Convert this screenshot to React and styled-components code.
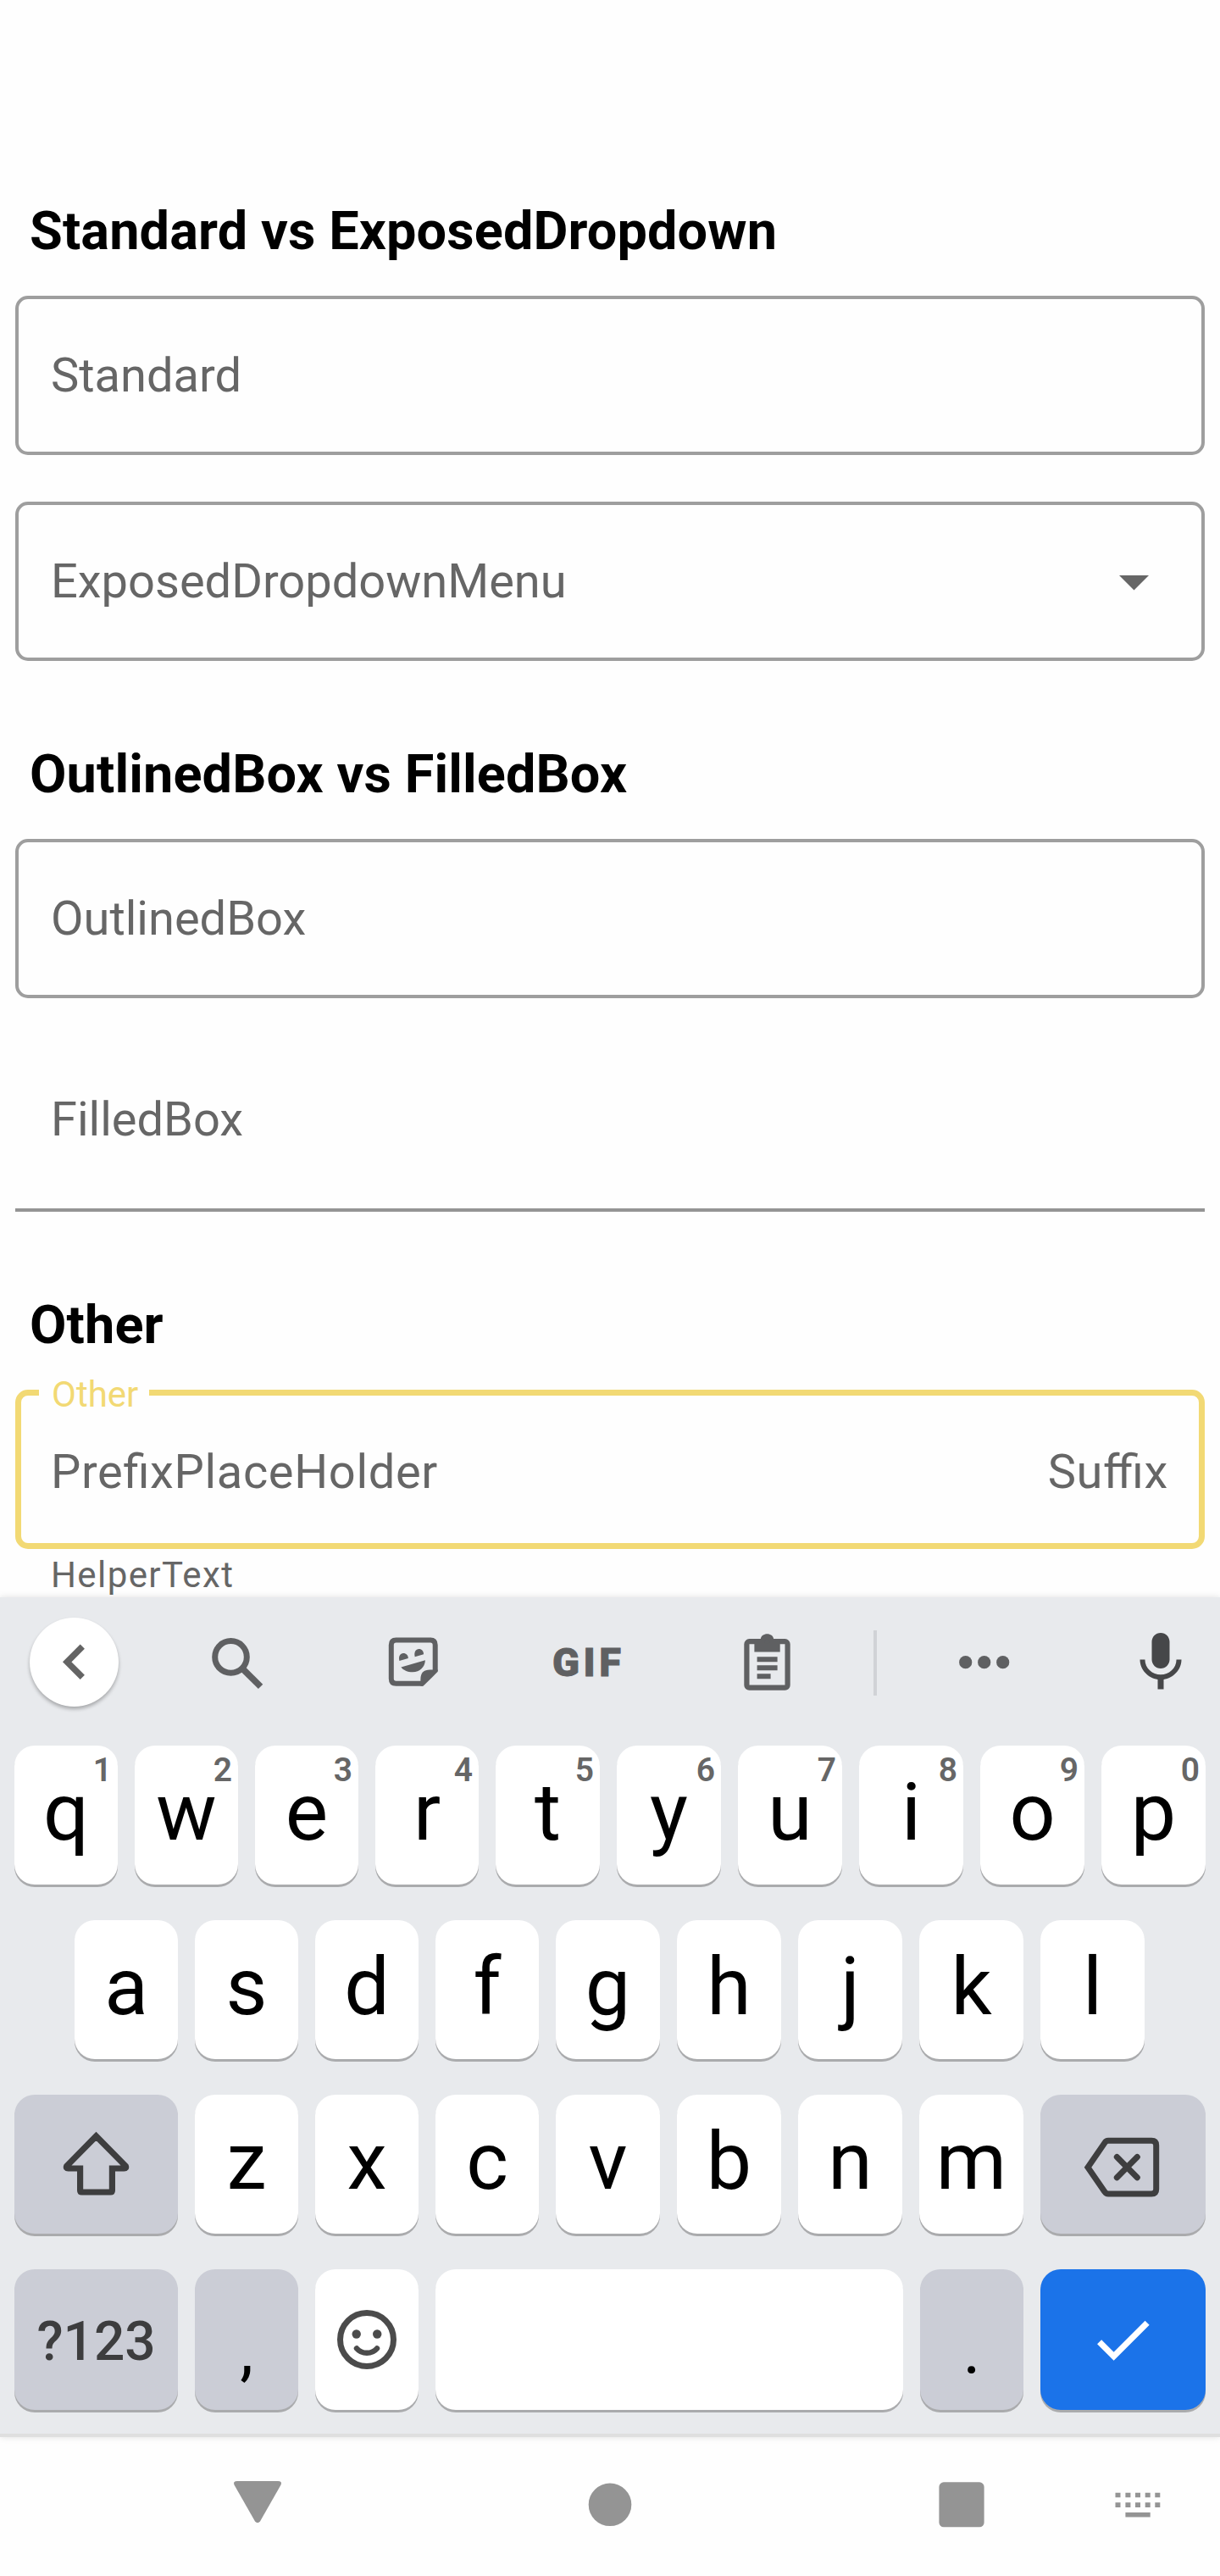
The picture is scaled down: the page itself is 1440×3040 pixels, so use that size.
import React from "react";
import styled, { createGlobalStyle } from "styled-components";

const GlobalStyle = createGlobalStyle`
  * { box-sizing: border-box; }
  html, body { margin: 0; padding: 0; background: #fefefe; }
`;

const Screen = styled.div`
  width: 1440px;
  height: 3040px;
  display: flex;
  flex-direction: column;
  overflow: hidden;
  background: #fefefe;
  font-family: Roboto, "Liberation Sans", sans-serif;
`;

const Form = styled.main`
  height: 1885px;
  flex: none;
  padding: 236px 18px 0;
  overflow: hidden;
`;

const Section = styled.section`
  margin-bottom: 97px;
`;

const Heading = styled.h2`
  margin: 0 0 39px;
  padding-left: 17px;
  font-size: 63px;
  line-height: 74px;
  font-weight: 700;
  letter-spacing: 0.12px;
  color: #000;
`;

const Field = styled.div`
  position: relative;
  display: flex;
  align-items: center;
  justify-content: space-between;
  height: 188px;
  padding: ${(p) => (p.$focused ? "6px 36px 0 35px" : "0 62px 0 38px")};
  border: ${(p) => (p.$focused ? "7px solid #f2d974" : "4px solid #9e9e9e")};
  border-radius: 15px;
  font-size: 56px;
  line-height: 66px;
  letter-spacing: ${(p) => (p.$focused ? "0.65px" : "0")};
  font-feature-settings: "liga" 1;
  color: #666;

  & + & {
    margin-top: 55px;
  }
`;

const FilledField = styled(Field)`
  height: 196px;
  padding-bottom: 19px;
  padding-left: 42px;
  border: 0;
  border-bottom: 4px solid #949494;
  border-radius: 0;

  ${Field} + & {
    margin-top: 56px;
  }
`;

const FloatingLabel = styled.span`
  position: absolute;
  left: 21px;
  top: -26px;
  width: 130px;
  padding-left: 15px;
  background: #fefefe;
  font-size: 42px;
  line-height: 50px;
  letter-spacing: 0;
  color: #f2d974;
`;

const Helper = styled.p`
  margin: 6px 0 0;
  padding-left: 42px;
  font-size: 42px;
  line-height: 50px;
  letter-spacing: 1.4px;
  color: #666;
`;

const DropdownArrow = styled.svg`
  display: block;
  margin-top: 3px;
`;

const Keyboard = styled.div`
  position: relative;
  flex: none;
  height: 991px;
  background: #e8eaed;
  border-bottom: 4px solid #dfdfdf;
  box-shadow: 0 0 8px rgba(0, 0, 0, 0.12);
`;

const Toolbar = styled.div`
  display: flex;
  align-items: center;
  height: 154px;
  margin-bottom: 21px;
  padding-left: 35px;
`;

const BackButton = styled.button`
  width: 105px;
  height: 105px;
  margin: 0 0 1px;
  padding: 0;
  border: 0;
  border-radius: 50%;
  background: #fff;
  box-shadow: 0 3px 4px rgba(0, 0, 0, 0.28);
`;

const ToolIcon = styled.svg`
  display: block;
  flex: none;
  width: 84px;
  height: 84px;
  margin-left: ${(p) => p.$gap}px;
  color: ${(p) => p.$tone || "#5f6062"};
`;

const GifLabel = styled.span`
  width: 90px;
  margin-left: 119px;
  padding-left: 3px;
  font-size: 47px;
  line-height: 54px;
  font-weight: 900;
  letter-spacing: 4.5px;
  white-space: nowrap;
  -webkit-text-stroke: 0.8px #5f6062;
  color: #5f6062;
`;

const Divider = styled.span`
  width: 4px;
  height: 77px;
  margin-left: 84px;
  background: #d0d2d6;
`;

const KeyRow = styled.div`
  display: flex;
  gap: 20px;
  height: ${(p) => p.$height || 164}px;
  margin-bottom: 42px;
  padding: 0 ${(p) => p.$inset || 17}px;
`;

const keyColors = { light: "#fff", dark: "#cbcdd6", accent: "#1b73e9" };

const Key = styled.button`
  position: relative;
  display: flex;
  align-items: center;
  justify-content: center;
  flex: ${(p) => (p.$width ? `0 0 ${p.$width}px` : "1 1 0")};
  min-width: 0;
  margin: 0;
  padding: 0 0 7px;
  border: 0;
  border-radius: 24px;
  background: ${(p) => keyColors[p.$kind || "light"]};
  box-shadow: 0 3px 0 #aaabad;
  font-family: inherit;
  font-size: 95px;
  line-height: 111px;
  color: #000;
`;

const PunctuationKey = styled(Key)`
  padding: 26px 0 0;
  font-size: 80px;
  line-height: 94px;
`;

const SymbolsKey = styled(Key)`
  padding: 5px 0 0;
  font-size: 64px;
  line-height: 75px;
  font-weight: 500;
  color: #3d3d3e;
`;

const IconKey = styled(Key)`
  padding: 0;
`;

const Hint = styled.span`
  position: absolute;
  top: 6px;
  right: 7px;
  font-size: 39px;
  line-height: 46px;
  font-weight: 600;
  color: #666;
`;

const NavBar = styled.nav`
  display: flex;
  align-items: flex-start;
  height: 164px;
  padding: 36px 0 0 260px;
`;

const NavIcon = styled.svg`
  display: block;
  flex: none;
  width: 88px;
  height: 88px;
  margin-right: ${(p) => p.$after || 0}px;
  fill: #949494;
`;

const TOP_ROW = [..."qwertyuiop"];
const HOME_ROW = [..."asdfghjkl"];
const BOTTOM_ROW = [..."zxcvbnm"];

// The first few keys of each row are a pixel narrower, so columns stay on whole pixels.
function LetterKeys({ letters, hints, narrow }) {
  return letters.map((letter, i) => (
    <Key key={letter} $width={i < narrow ? 122 : 123}>
      {letter}
      {hints && <Hint>{(i + 1) % 10}</Hint>}
    </Key>
  ));
}

function SuggestionBar() {
  return (
    <Toolbar>
      <BackButton aria-label="Back">
        <svg width="105" height="105" viewBox="0 0 105 105" fill="none" stroke="#646464" strokeWidth="7.4">
          <path d="M62.3 34.2 44.2 52.3 62.3 70.4" />
        </svg>
      </BackButton>
      <ToolIcon $gap={98} viewBox="0 0 84 84" fill="none" stroke="currentColor" strokeWidth="7">
        <circle cx="34.5" cy="35.4" r="18.8" />
        <path d="M48 49 69.6 70.4" strokeWidth="7.6" />
      </ToolIcon>
      <ToolIcon $gap={124} viewBox="0 0 84 84" fill="currentColor">
        <path
          d="M53 66.800H21.500Q15.800 66.800 15.800 61V21.200Q15.800 15.400 21.500 15.400H62Q67.700 15.400 67.700 21.200V52"
          fill="none"
          stroke="currentColor"
          strokeWidth="6"
        />
        <path d="M50.400 66V61.500Q50.400 50.400 61.500 50.400H70.700V52.800L53.500 69.800H50.400Z" />
        <path d="M25.400 40C24 34.500 26.500 31 30 31C33.500 31 35.800 33.500 35.800 37Z" />
        <path d="M43.700 35.300C42.300 29.800 44.800 26 48.500 26C51.800 26 54.100 28.700 54 32.200Z" />
        <path d="M27.400 47.500 55.900 39.300C55.500 47.500 49.500 53.300 41 53.300C35 53.300 30 51 27.400 47.500Z" />
      </ToolIcon>
      <GifLabel>GIF</GifLabel>
      <ToolIcon $gap={124} viewBox="0 0 84 84" fill="currentColor">
        <rect x="18.400" y="17.200" width="48.200" height="54.500" rx="3" fill="none" stroke="currentColor" strokeWidth="6.200" />
        <path
          fillRule="evenodd"
          d="M27.400 14H34.800C35.500 10.500 38.500 8.300 42.500 8.300S49.500 10.500 50.200 14H57.700V29.500H27.400ZM42.500 14.200A2.800 2.800 0 1 0 42.500 19.800A2.800 2.800 0 1 0 42.500 14.200Z"
        />
        <path d="M30.600 35.300H54.600V41.300H30.600ZM30.600 45.300H54.600V51.300H30.600ZM30.600 55.300H46.600V61.300H30.600Z" />
      </ToolIcon>
      <Divider />
      <ToolIcon $gap={85} viewBox="0 0 84 84" fill="currentColor">
        <circle cx="19.700" cy="41.700" r="7.600" />
        <circle cx="41.700" cy="41.700" r="7.600" />
        <circle cx="63.700" cy="41.700" r="7.600" />
      </ToolIcon>
      <ToolIcon $gap={124} $tone="#464749" viewBox="0 0 24 24" fill="currentColor">
        <path d="M12 14c1.660 0 3-1.340 3-3V5c0-1.660-1.340-3-3-3S9 3.340 9 5v6c0 1.660 1.340 3 3 3zm5.300-3c0 3-2.540 5.100-5.300 5.100S6.700 14 6.700 11H5c0 3.410 2.720 6.230 6 6.720V21h2v-3.280c3.280-.48 6-3.300 6-6.720h-1.700z" />
      </ToolIcon>
    </Toolbar>
  );
}

function ShiftIcon() {
  return (
    <svg width="88" height="88" viewBox="0 0 88 88" fill="none" stroke="#3e3e3f" strokeWidth="7.200">
      <path d="M43.500 10.900 8.700 46.200Q7.500 49 10.500 49H24.600V75Q24.600 77 26.600 77H60.400Q62.400 77 62.400 75V49H76.500Q79.500 49 78.300 46.200Z" />
    </svg>
  );
}

function BackspaceIcon() {
  return (
    <svg width="100" height="84" viewBox="0 -4 100 84" fill="none" stroke="#3e3e3f" strokeWidth="7">
      <path d="M83.200 10.300H32Q29.500 10.300 28 12.700L8 41.700 28 70.700Q29.500 73 32 73H83.200Q88.700 73 88.700 67.500V15.800Q88.700 10.300 83.200 10.300Z" />
      <path d="M42.300 29.500 66.300 53.800M66.300 29.500 42.300 53.800" strokeLinecap="round" />
    </svg>
  );
}

function SmileIcon() {
  return (
    <svg width="72" height="72" viewBox="0 0 72 72" fill="#4b4b4b">
      <circle cx="36" cy="36" r="31.500" fill="none" stroke="#4b4b4b" strokeWidth="7" />
      <circle cx="23.700" cy="29.500" r="5.200" />
      <circle cx="48.200" cy="29.500" r="5.200" />
      <path d="M24 46.500Q28.500 51.800 36 51.800T48 46.500" fill="none" stroke="#4b4b4b" strokeWidth="6.500" strokeLinecap="round" />
    </svg>
  );
}

function CheckIcon() {
  return (
    <svg width="84" height="84" viewBox="0 0 84 84" fill="none" stroke="#fff" strokeWidth="7.200">
      <path d="M13.600 44.700 30.600 61.700 70.100 22.200" />
    </svg>
  );
}

export default function App() {
  return (
    <Screen>
      <GlobalStyle />
      <Form>
        <Section>
          <Heading>Standard vs ExposedDropdown</Heading>
          <Field>Standard</Field>
          <Field>
            ExposedDropdownMenu
            <DropdownArrow width="35" height="18" viewBox="0 0 35 18" fill="#666">
              <path d="M0 0H35L17.500 17.500Z" />
            </DropdownArrow>
          </Field>
        </Section>
        <Section>
          <Heading>OutlinedBox vs FilledBox</Heading>
          <Field>OutlinedBox</Field>
          <FilledField>FilledBox</FilledField>
        </Section>
        <Section>
          <Heading>Other</Heading>
          <Field $focused>
            <FloatingLabel>Other</FloatingLabel>
            <span>PrefixPlaceHolder</span>
            <span>Suffix</span>
          </Field>
          <Helper>HelperText</Helper>
        </Section>
      </Form>
      <Keyboard>
        <SuggestionBar />
        <KeyRow>
          <LetterKeys letters={TOP_ROW} narrow={4} hints />
        </KeyRow>
        <KeyRow $inset={88}>
          <LetterKeys letters={HOME_ROW} narrow={4} />
        </KeyRow>
        <KeyRow>
          <IconKey $kind="dark" $width={193} aria-label="Shift">
            <ShiftIcon />
          </IconKey>
          <LetterKeys letters={BOTTOM_ROW} narrow={3} />
          <IconKey $kind="dark" $width={195} aria-label="Backspace">
            <BackspaceIcon />
          </IconKey>
        </KeyRow>
        <KeyRow $height={166}>
          <SymbolsKey $kind="dark" $width={193}>?123</SymbolsKey>
          <PunctuationKey $kind="dark" $width={122}>,</PunctuationKey>
          <IconKey $width={122} aria-label="Emoji">
            <SmileIcon />
          </IconKey>
          <Key aria-label="Space" />
          <PunctuationKey $kind="dark" $width={122}>.</PunctuationKey>
          <IconKey $kind="accent" $width={195} aria-label="Done">
            <CheckIcon />
          </IconKey>
        </KeyRow>
      </Keyboard>
      <NavBar>
        <NavIcon $after={328} viewBox="0 0 88 88">
          <path d="M20 16H68Q73.500 16 71.500 20.500L47 63.500Q44 67 41 63.500L16.500 20.500Q14.500 16 20 16Z" />
        </NavIcon>
        <NavIcon $after={327} viewBox="0 0 88 88">
          <circle cx="44" cy="43.800" r="25.300" />
        </NavIcon>
        <NavIcon $after={120} viewBox="0 0 88 88">
          <rect x="17.400" y="17.300" width="53.200" height="53" rx="5.500" />
        </NavIcon>
        <NavIcon viewBox="0 0 88 88">
          <path d="M17.500 29.700h6v5.500h-6zM29.400 29.700h6v5.500h-6zM41 29.700h6v5.500h-6zM52.700 29.700h6v5.500h-6zM64.300 29.700h6v5.500h-6zM17.500 41.300h6v5.700h-6zM29.400 41.300h6v5.700h-6zM41 41.300h6v5.700h-6zM52.700 41.300h6v5.700h-6zM64.300 41.300h6v5.700h-6zM29.400 53h29.300v5.600h-29.300z" />
        </NavIcon>
      </NavBar>
    </Screen>
  );
}
